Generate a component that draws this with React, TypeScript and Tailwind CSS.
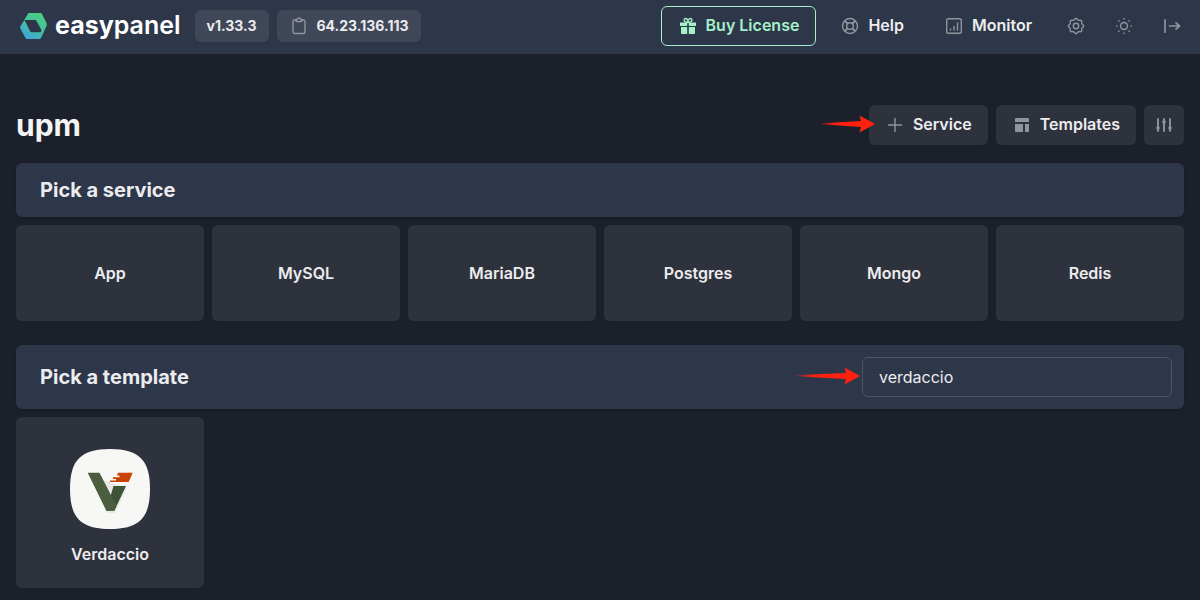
import { useState, type ReactNode } from "react";

function Icon({ children }: { children: ReactNode }) {
  return (
    <svg
      viewBox="0 0 20 20"
      className="size-5 shrink-0"
      fill="none"
      stroke="currentColor"
      strokeWidth="1.4"
      strokeLinecap="round"
      strokeLinejoin="round"
      aria-hidden="true"
    >
      {children}
    </svg>
  );
}

function LogoMark() {
  return (
    <svg viewBox="0 0 27 26" className="h-[26px] w-[27px] shrink-0" aria-hidden="true">
      <defs>
        <linearGradient id="mark" x1="0.8" y1="0" x2="0.2" y2="1">
          <stop offset="0" stopColor="#48d27c" />
          <stop offset="0.55" stopColor="#45bda5" />
          <stop offset="1" stopColor="#3fa2e0" />
        </linearGradient>
      </defs>
      <path
        fill="url(#mark)"
        fillRule="evenodd"
        d="M9 0H20.500Q21.500 0 22 1L26.700 10.500Q27 11.500 26.700 12.500L21 25Q20.500 26 19.500 26H7Q6 26 5.500 25L.3 15.500Q0 14.500.3 13.500L4 7.500 8 .8Q8.300 0 9 0ZM4.500 7 10 18Q10.500 19.200 11.500 19.200H20.700L21.500 17 16.500 8Q16 7 15 7Z"
      />
    </svg>
  );
}

const gearOutline =
  "M" +
  Array.from({ length: 96 }, (_, i) => {
    const angle = (i / 96) * Math.PI * 2;
    const radius = 6.9 + 0.7 * Math.cos(8 * angle);
    return `${(10 + radius * Math.cos(angle)).toFixed(2)} ${(10 + radius * Math.sin(angle)).toFixed(2)}`;
  }).join("L") +
  "Z";

function RedArrow({ id, tail, className }: { id: string; tail: number; className: string }) {
  return (
    <svg viewBox="0 0 64 18" className={`pointer-events-none absolute h-[18px] w-16 ${className}`} aria-hidden="true">
      <defs>
        <linearGradient id={id} x1="0" x2="1">
          <stop offset="0" stopColor="#ff2010" stopOpacity="0.2" />
          <stop offset="0.25" stopColor="#ff2010" />
        </linearGradient>
      </defs>
      <path fill={`url(#${id})`} d={`M${tail} 8.300 50 6 48.500 0.500 64 9 48.500 17.500 50 12 ${tail} 9.200Z`} />
    </svg>
  );
}

function VerdaccioLogo() {
  return (
    <svg viewBox="0 0 80 80" className="size-20" aria-hidden="true">
      <path fill="#f7f7f6" d="M40 0C69 0 80 11 80 40S69 80 40 80 0 69 0 40 11 0 40 0Z" />
      <path fill="#000" opacity=".06" d="M22 27 37 64H45L57 39Z" />
      <path fill="#405236" d="M43.500 37H56L44.300 61.700H36.300Z" />
      <path fill="#4a5e3f" d="M17.700 23.700H29.500L46.500 57 44.300 61.700H36.300Z" />
      <path fill="#cb4303" d="M48 23.700H62.700L58.700 33H40V31.500H46V30H43V28.300H49.500V26.500H47Z" />
    </svg>
  );
}

const services = ["App", "MySQL", "MariaDB", "Postgres", "Mongo", "Redis"];
const navItem = "flex h-10 items-center rounded-md font-semibold";
const muted = "text-[#8f949e]";

function Label({ children }: { children: ReactNode }) {
  return <span className="pb-0.5">{children}</span>;
}

export default function App() {
  const [query, setQuery] = useState("verdaccio");
  return (
    <div className="min-h-screen bg-[#1c202b] font-['Inter',sans-serif] text-base text-[#ececee]">
      <header className="flex h-[54px] items-center justify-between bg-[#2e374a] pr-2 pb-[2px] pl-5">
        <div className="flex items-center">
          <a href="#home" className="flex items-center gap-2 text-white">
            <LogoMark />
            <span className="pb-0.5 text-[25px] leading-8 font-semibold">
              <b className="font-bold">easy</b>panel
            </span>
          </a>
          <div className="ml-[14px] flex gap-2 text-sm font-bold">
            <button className="h-8 rounded-md bg-[#3f4758] px-3">v1.33.3</button>
            <button className="flex h-8 items-center gap-2 rounded-md bg-[#3f4758] px-3">
              <span className={muted}>
                <Icon>
                  <path d="M7 4H5.500Q4 4 4 5.500V16Q4 17.500 5.500 17.500H14.500Q16 17.500 16 16V5.500Q16 4 14.500 4H13" />
                  <path d="M7 3.500H8Q8.500 2 10 2T12 3.500H13V4.500Q13 5.500 12 5.500H8Q7 5.500 7 4.500Z" />
                </Icon>
              </span>
              64.23.136.113
            </button>
          </div>
        </div>
        <nav className="flex items-center">
          <button className={`${navItem} mr-6 gap-2 border border-[#a5f0c8] px-4 text-[#a5f0c8]`}>
            <svg viewBox="0 0 20 20" className="size-5" fill="currentColor" aria-hidden="true">
              <path d="M2 6.500H9.200V10H2ZM10.800 6.500H18V10H10.800ZM3 11H9.200V18H4Q3 18 3 17ZM10.800 11H17V17Q17 18 16 18H10.800Z" />
              <path fill="none" stroke="currentColor" strokeWidth="1.300" d="M10 6.500C5 6.500 5.500 2.500 7.500 2.500S10 4.500 10 6.500C10 4.500 10.500 2.500 12.500 2.500S15 6.500 10 6.500Z" />
            </svg>
            <Label>Buy License</Label>
          </button>
          <a href="#help" className={`${navItem} mr-10 gap-2`}>
            <span className={muted}>
              <Icon>
                <circle cx="10" cy="10" r="7.500" />
                <circle cx="10" cy="10" r="3.300" />
                <path strokeWidth="2" strokeLinecap="butt" d="M4.700 4.700 7.600 7.600M12.400 12.400 15.300 15.300M4.700 15.300 7.600 12.400M12.400 7.600 15.300 4.700" />
              </Icon>
            </span>
            <Label>Help</Label>
          </a>
          <a href="#monitor" className={`${navItem} mr-6 gap-2`}>
            <span className={muted}>
              <Icon>
                <rect x="2.700" y="2.700" width="14.600" height="14.600" rx="1.800" />
                <path d="M6.500 13V14M10 10.500V14M13.500 7V14" />
              </Icon>
            </span>
            <Label>Monitor</Label>
          </a>
          <div className={`flex gap-2 ${muted}`}>
            <button aria-label="Settings" className="grid size-10 place-items-center">
              <Icon>
                <path d={gearOutline} />
                <circle cx="10" cy="10" r="2.700" />
              </Icon>
            </button>
            <button aria-label="Toggle theme" className="grid size-10 place-items-center">
              <Icon>
                <circle cx="10" cy="10" r="3.500" />
                <path d="M10 2.500V3M10 17V17.500M2.500 10H3M17 10H17.500M4.700 4.700 5.100 5.100M14.900 14.900 15.300 15.300M4.700 15.300 5.100 14.900M14.900 5.100 15.300 4.700" />
              </Icon>
            </button>
            <button aria-label="Log out" className="grid size-10 place-items-center">
              <Icon>
                <path strokeWidth="1.700" d="M3 3.800V16.200M7.500 10H17.500M14 6.800 17.500 10 14 13.200" />
              </Icon>
            </button>
          </div>
        </nav>
      </header>

      <main className="px-4 pt-[51px]">
        <div className="flex items-center justify-between">
          <h1 className="text-3xl font-bold text-[#f4f4f5]">upm</h1>
          <div className="relative flex gap-2 font-semibold">
            <button className="flex h-10 items-center gap-2 rounded-md bg-[#2e323d] px-4">
              <span className={muted}>
                <Icon>
                  <path d="M10 3.500V16.500M3.500 10H16.500" />
                </Icon>
              </span>
              <Label>Service</Label>
            </button>
            <button className="flex h-10 items-center gap-2 rounded-md bg-[#2e323d] px-4">
              <svg viewBox="0 0 20 20" className={`size-5 ${muted}`} fill="currentColor" aria-hidden="true">
                <path d="M4 3H16Q17 3 17 4V7H3V4Q3 3 4 3ZM3 9H11V17H4Q3 17 3 16ZM13 9H17V16Q17 17 16 17H13Z" />
              </svg>
              <Label>Templates</Label>
            </button>
            <button aria-label="Options" className={`grid size-10 place-items-center rounded-md bg-[#2e323d] ${muted}`}>
              <Icon>
                <path strokeWidth="1.900" d="M4 4V16M10 4V16M16 4V16" />
                <path strokeWidth="3.600" d="M4 13V13.100M10 6.800V6.900M16 13V13.100" />
              </Icon>
            </button>
            <RedArrow id="tail-service" tail={10} className="top-[10px] -left-[58px]" />
          </div>
        </div>

        <section>
          <h2 className="mt-[18px] flex h-[54px] items-center rounded-md bg-[#2e374a] px-6 text-xl font-bold shadow-sm">
            Pick a service
          </h2>
          <div className="mt-2 grid grid-cols-6 gap-2">
            {services.map((name) => (
              <button key={name} className="h-24 rounded-md bg-[#2e323d] font-semibold">
                <Label>{name}</Label>
              </button>
            ))}
          </div>
        </section>

        <section className="mt-6">
          <div className="flex h-16 items-center justify-between rounded-md bg-[#2e374a] pr-3 pl-6 shadow-sm">
            <h2 className="text-xl font-bold">Pick a template</h2>
            <div className="relative">
              <input
                aria-label="Search templates"
                value={query}
                onChange={(e) => setQuery(e.target.value)}
                className="h-10 w-[310px] rounded-md border border-[#4d5667] bg-transparent px-4 outline-none"
              />
              <RedArrow id="tail-search" tail={0} className="top-[10px] -left-[66px]" />
            </div>
          </div>
          <div className="mt-2 grid grid-cols-6 gap-2">
            <button className="flex flex-col items-center gap-[13px] rounded-md bg-[#2e323d] pt-8 pb-[22px] font-semibold">
              <VerdaccioLogo />
              Verdaccio
            </button>
          </div>
        </section>
      </main>
    </div>
  );
}
